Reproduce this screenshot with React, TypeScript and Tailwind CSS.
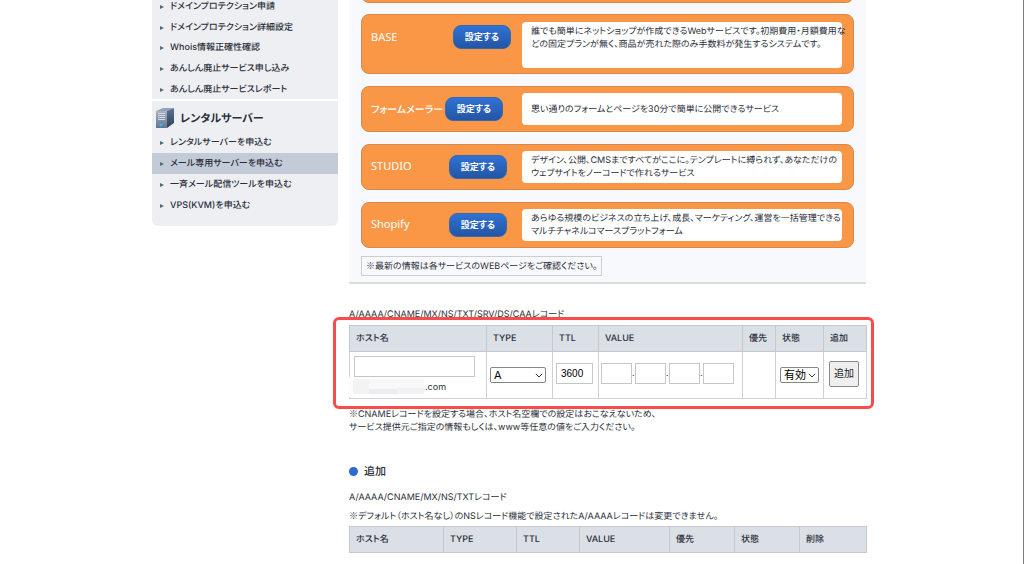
import type { ReactNode } from "react";

const domainLinks = [
  "ドメインプロテクション申請",
  "ドメインプロテクション詳細設定",
  "Whois情報正確性確認",
  "あんしん廃止サービス申し込み",
  "あんしん廃止サービスレポート",
];

const serverLinks = [
  "レンタルサーバーを申込む",
  "メール専用サーバーを申込む",
  "一斉メール配信ツールを申込む",
  "VPS(KVM)を申込む",
];

type Service = { name: string; nameStyle: string; lines: string[]; tall?: boolean };

const services: Service[] = [
  {
    name: "BASE",
    nameStyle: "w-[82px] text-[11px]",
    tall: true,
    lines: [
      "誰でも簡単にネットショップが作成できるWebサービスです。初期費用・月額費用な",
      "どの固定プランが無く、商品が売れた際のみ手数料が発生するシステムです。",
    ],
  },
  {
    name: "フォームメーラー",
    nameStyle: "w-[74px] text-[10px] font-medium",
    lines: ["思い通りのフォームとページを30分で簡単に公開できるサービス"],
  },
  {
    name: "STUDIO",
    nameStyle: "w-[78px] text-[11px]",
    lines: [
      "デザイン、公開、CMSまですべてがここに。テンプレートに縛られず、あなただけの",
      "ウェブサイトをノーコードで作れるサービス",
    ],
  },
  {
    name: "Shopify",
    nameStyle: "w-[78px] text-[11px]",
    lines: [
      "あらゆる規模のビジネスの立ち上げ、成長、マーケティング、運営を一括管理できる",
      "マルチチャネルコマースプラットフォーム",
    ],
  },
];

function SideLink({ label, active }: { label: string; active?: boolean }) {
  return (
    <li className={active ? "flex bg-[#c3cad8]" : "flex"}>
      <a href="#" className="flex w-full items-center pt-0.5 pl-2 text-[9px] leading-4 font-medium">
        <svg viewBox="0 0 4 4" className="mr-1.5 size-1 fill-[#4b6f74]" aria-hidden="true">
          <path d="M0 0L4 2L0 4Z" />
        </svg>
        {label}
      </a>
    </li>
  );
}

function ServerIcon() {
  return (
    <svg viewBox="0 0 20 22" className="h-[22px] w-5" aria-hidden="true">
      <defs>
        <linearGradient id="front" x1="0" y1="0" x2="0" y2="1">
          <stop offset="0" stopColor="#a9b3c3" />
          <stop offset="1" stopColor="#62738f" />
        </linearGradient>
        <linearGradient id="side" x1="0" y1="0" x2="0" y2="1">
          <stop offset="0" stopColor="#5f7494" />
          <stop offset="1" stopColor="#2e405f" />
        </linearGradient>
      </defs>
      <path d="M1 4L8 1L19 1L12 4Z" fill="#8fa3be" />
      <path d="M1 4H12V21H1Z" fill="url(#front)" />
      <path d="M12 4L19 1V16L12 21Z" fill="url(#side)" />
      <path d="M3 6.5H10M3 8.5H10M3 10.5H10M3 12.5H10" stroke="#d3d9e2" strokeWidth="1" />
      <circle cx="6" cy="18" r="1.6" fill="#35b6ee" />
    </svg>
  );
}

function NoteMark() {
  return <span className="font-['Noto_Sans_CJK_JP',sans-serif]">※</span>;
}

function ServiceCard({ service }: { service: Service }) {
  return (
    <li
      className={
        service.tall
          ? "flex h-[60px] items-start rounded-lg border border-[#d58a4a] bg-[#fa9746] pt-[7px] pr-[11px] pl-[9px]"
          : "flex h-[46px] items-center rounded-lg border border-[#d58a4a] bg-[#fa9746] pr-[11px] pl-[9px]"
      }
    >
      <h3
        className={`${service.nameStyle} ${service.tall ? "mt-2" : ""} shrink-0 font-['Noto_Sans','Noto_Sans_CJK_JP',sans-serif] leading-4 whitespace-nowrap text-white`}
      >
        {service.name}
      </h3>
      <button
        type="button"
        className={`${service.tall ? "mt-[3px]" : ""} h-6 w-[58px] shrink-0 rounded-lg border border-[#3a68b0] bg-linear-to-b from-[#2f72d4] to-[#2356a4] text-[9px] leading-4 font-bold text-white`}
      >
        設定する
      </button>
      <p
        className={`${service.tall ? "h-[46px] pt-[3px]" : "flex h-8 flex-col justify-center"} ml-auto w-[320px] rounded-sm bg-white pl-[9px] text-[9px] leading-[13px] whitespace-nowrap`}
      >
        {service.lines.map((line) => (
          <span key={line} className="block">
            {line}
          </span>
        ))}
      </p>
    </li>
  );
}

function HeadCell({ width, children }: { width: string; children: ReactNode }) {
  return (
    <th
      scope="col"
      className={`${width} h-[26px] border border-[#c5c8cc] bg-[#dbdfe6] pt-px pl-1.5 text-left text-[9px] leading-4 font-medium`}
    >
      {children}
    </th>
  );
}

function Picker({ label, options, width }: { label: string; options: string[]; width: string }) {
  return (
    <span className={`relative block ${width}`}>
      <select
        aria-label={label}
        className="block h-4 w-full appearance-none rounded-xs border border-[#858585] bg-white pl-[3px] text-[11px] leading-[14px] text-black"
      >
        {options.map((option) => (
          <option key={option}>{option}</option>
        ))}
      </select>
      <svg
        viewBox="0 0 8 5"
        className="pointer-events-none absolute top-1.5 right-[3px] h-[5px] w-2 fill-none stroke-[#333]"
        aria-hidden="true"
      >
        <path d="M0.8 0.8L4 4L7.2 0.8" />
      </svg>
    </span>
  );
}

const cell = "border border-[#d0d2d6] p-0";
const box = "h-[21px] border border-[#c4c6ca] bg-white";

export default function App() {
  return (
    <div className="h-screen overflow-hidden border-r border-[#7c7c7c] bg-white pr-[5px] font-['Inter','Noto_Sans_CJK_JP',sans-serif] text-[#2b2f3a] [font-feature-settings:'palt'] [text-rendering:geometricPrecision]">
      <div className="mx-auto flex w-[714px] items-start gap-[11px]">
        <nav aria-label="サイドメニュー" className="-mt-1 w-[186px] shrink-0">
          <ul className="grid h-[103px] auto-rows-fr bg-[#eeeff3]">
            {domainLinks.map((label) => (
              <SideLink key={label} label={label} />
            ))}
          </ul>
          <section className="mt-0.5 rounded-b-md bg-[#eeeff3] pb-[11px]">
            <h2 className="flex h-[31px] items-center gap-[5px] pt-[3px] pl-[3px] text-[11px] leading-4 font-bold">
              <ServerIcon />
              レンタルサーバー
            </h2>
            <ul className="grid h-[83px] auto-rows-fr">
              {serverLinks.map((label, i) => (
                <SideLink key={label} label={label} active={i === 1} />
              ))}
            </ul>
          </section>
        </nav>

        <main className="w-[517px] text-[9px] leading-[13px]">
          <section className="border-b-2 border-[#d9dbe0] bg-[#f8f9fd] px-3 pb-1.5">
            <div className="-mt-2 h-[11px] rounded-b-lg border border-[#d58a4a] bg-[#fa9746]" />
            <ul className="mt-[11px] flex flex-col gap-3">
              {services.map((service) => (
                <ServiceCard key={service.name} service={service} />
              ))}
            </ul>
            <p className="mt-2 inline-block h-5 border border-[#ccced3] px-1 leading-[18px]">
              <NoteMark />
              最新の情報は各サービスのWEBページをご確認ください。
            </p>
          </section>

          <section>
            <p className="mt-6 mb-1">A/AAAA/CNAME/MX/NS/TXT/SRV/DS/CAAレコード</p>
            <div className="relative">
              <table className="w-full table-fixed border-collapse">
                <thead>
                  <tr>
                    <HeadCell width="w-[137px]">ホスト名</HeadCell>
                    <HeadCell width="w-[66px]">TYPE</HeadCell>
                    <HeadCell width="w-[46px]">TTL</HeadCell>
                    <HeadCell width="w-[144px]">VALUE</HeadCell>
                    <HeadCell width="w-[33px]">優先</HeadCell>
                    <HeadCell width="w-[48px]">状態</HeadCell>
                    <HeadCell width="w-[43px]">追加</HeadCell>
                  </tr>
                </thead>
                <tbody>
                  <tr className="h-[47px]">
                    <td className={`${cell} pt-0.5`}>
                      <input aria-label="ホスト名" className={`${box} ml-1 block w-[121px] px-1`} />
                      <div className="-ml-px flex h-[19px] items-center">
                        <svg
                          viewBox="0 0 76 20"
                          preserveAspectRatio="none"
                          className="h-5 w-[76px]"
                          aria-hidden="true"
                        >
                          <path d="M0 0H76V20H0Z" fill="#fdfdfd" />
                          <path d="M4 2H20V17H4Z" fill="#f3f3f4" />
                          <path d="M20 2H75V12H20Z" fill="#f8f8f9" />
                          <path d="M20 12H48V17H20Z" fill="#ececee" />
                          <path d="M48 11H75V17H48Z" fill="#f1f1f3" />
                        </svg>
                        <span className="pt-0.5">.com</span>
                      </div>
                    </td>
                    <td className={`${cell} pl-[3px]`}>
                      <Picker label="TYPE" options={["A", "AAAA", "CNAME", "MX", "NS", "TXT"]} width="w-[56px]" />
                    </td>
                    <td className={`${cell} pb-[3px] pl-[3px]`}>
                      <input
                        aria-label="TTL"
                        defaultValue="3600"
                        className={`${box} block w-[37px] px-1 font-['Liberation_Sans',sans-serif] text-[10px] text-black`}
                      />
                    </td>
                    <td className={`${cell} pb-[3px] pl-0.5`}>
                      <div className="flex items-center">
                        {[1, 2, 3, 4].map((n) => (
                          <span key={n} className="flex items-center">
                            <input aria-label={`VALUE ${n}`} className={`${box} w-[31px] px-1`} />
                            {n < 4 && <span className="w-[3px]">.</span>}
                          </span>
                        ))}
                      </div>
                    </td>
                    <td className={cell} />
                    <td className={`${cell} pl-1`}>
                      <Picker label="状態" options={["有効", "無効"]} width="w-[39px]" />
                    </td>
                    <td className={`${cell} pb-[3px] pl-[5px]`}>
                      <button
                        type="button"
                        className="block h-[26px] w-[30px] rounded-xs border border-[#8a8a8a] bg-[#efefef] text-[10px] text-[#222]"
                      >
                        追加
                      </button>
                    </td>
                  </tr>
                </tbody>
              </table>
              <div className="pointer-events-none absolute -top-2 -right-2 -bottom-2.5 -left-4 rounded-md border-3 border-[#fa4b4b]" />
            </div>
            <p className="mt-2">
              <NoteMark />
              CNAMEレコードを設定する場合、ホスト名空欄での設定はおこなえないため、
              <br />
              サービス提供元ご指定の情報もしくは、www等任意の値をご入力ください。
            </p>
          </section>

          <section>
            <h2 className="mt-[29px] flex items-center gap-1.5 text-[11px] leading-4 font-medium">
              <span className="size-[9px] rounded-full bg-[#2b6bd1]" />
              追加
            </h2>
            <p className="mt-3">A/AAAA/CNAME/MX/NS/TXTレコード</p>
            <p className="mt-[5px]">
              <NoteMark />
              デフォルト（ホスト名なし）のNSレコード機能で設定されたA/AAAAレコードは変更できません。
            </p>
            <table className="mt-[3px] w-full table-fixed border-collapse">
              <thead>
                <tr>
                  <HeadCell width="w-[94px]">ホスト名</HeadCell>
                  <HeadCell width="w-[73px]">TYPE</HeadCell>
                  <HeadCell width="w-[63px]">TTL</HeadCell>
                  <HeadCell width="w-[90px]">VALUE</HeadCell>
                  <HeadCell width="w-[65px]">優先</HeadCell>
                  <HeadCell width="w-[65px]">状態</HeadCell>
                  <HeadCell width="w-[67px]">削除</HeadCell>
                </tr>
              </thead>
            </table>
          </section>
        </main>
      </div>
    </div>
  );
}
